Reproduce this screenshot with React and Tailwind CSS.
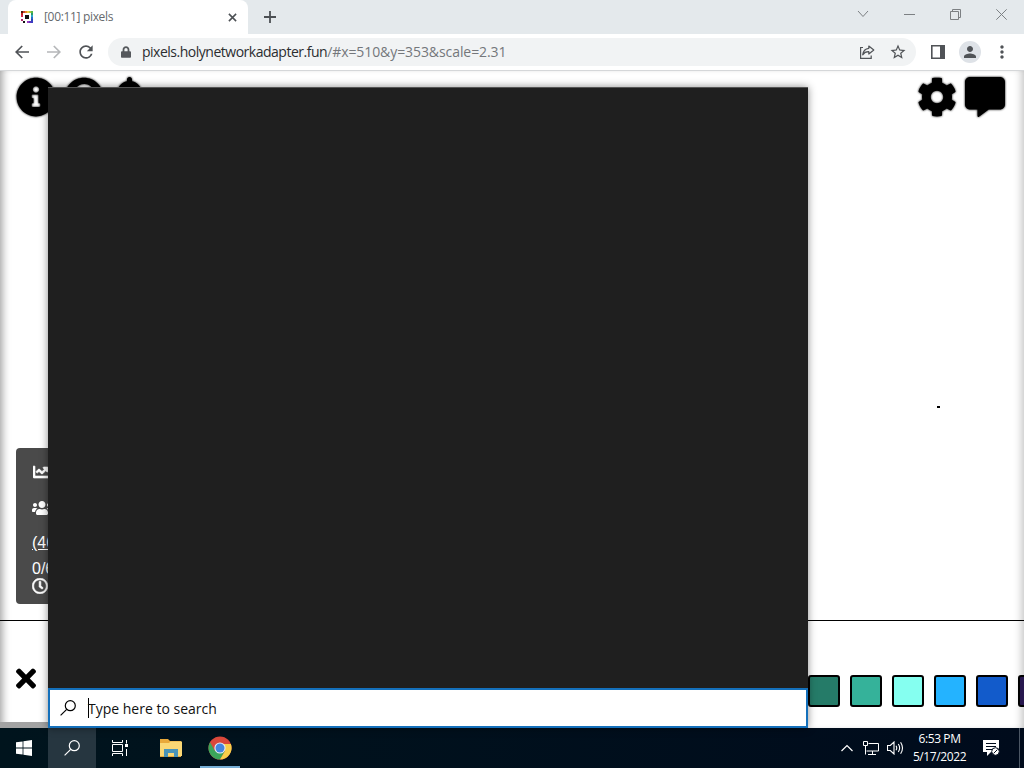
import React from 'react';
import {
  FaInfoCircle,
  FaQuestionCircle,
  FaBell,
  FaCog,
  FaCommentAlt,
  FaChartLine,
  FaUsers,
  FaRegClock,
  FaTimes,
  FaLock
} from 'react-icons/fa';
import { MdPerson, MdMoreVert, MdStarBorder, MdRefresh } from 'react-icons/md';

const palette = [
  'bg-[#257b68]',
  'bg-[#35b29a]',
  'bg-[#85fff0]',
  'bg-[#24b3ff]',
  'bg-[#125bcb]',
  'bg-[#27174e]'
];

const favicon = [
  '#4b1a10', '#c8402a', '#e88a2c', '#f0c843', '#a8c947', '#58b947',
  '#c0261c', '#ffffff', '#ffffff', '#ffffff', '#ffffff', '#2a9a6a',
  '#d0264c', '#ffffff', '#111111', '#111111', '#ffffff', '#28a8c8',
  '#ffffff', '#ffffff', '#111111', '#111111', '#ffffff', '#2868c8',
  '#b32a70', '#ffffff', '#ffffff', '#ffffff', '#ffffff', '#2a46b8',
  '#ffffff', '#111111', '#ffffff', '#9a3fc0', '#5b35c0', '#3c3cc0'
];

const SearchIcon = ({ className }) => (
  <svg viewBox="0 0 16 16" className={className} fill="none" stroke="currentColor" strokeWidth="1.2">
    <circle cx="10.3" cy="5.7" r="5" />
    <path d="M6.7 9.3L0.6 15.4" />
  </svg>
);

const TabStrip = () => (
  <div className="flex h-[34px] items-stretch bg-[#e4e9ec]">
    <div className="ml-2 flex w-[240px] items-center rounded-t-lg bg-white pl-[13px] pr-[11px]">
      <svg viewBox="0 0 6 6" className="h-3 w-3" shapeRendering="crispEdges">
        {favicon.map((fill, i) => (
          <rect key={i} x={i % 6} y={Math.floor(i / 6)} width="1" height="1" fill={fill} />
        ))}
      </svg>
      <span className="ml-[11px] flex-1 text-[12px] tracking-[-0.33px] text-[#66696d]">[00:11] pixels</span>
      <svg viewBox="0 0 10 10" className="h-[9px] w-[9px]" stroke="#4c5054" strokeWidth="1.7">
        <path d="M1 1l8 8M9 1l-8 8" />
      </svg>
    </div>
    <svg viewBox="0 0 12 12" className="ml-4 h-3 w-3 self-center" stroke="#4c5054" strokeWidth="1.8">
      <path d="M6 0v12M0 6h12" />
    </svg>
    <div className="ml-auto flex items-center gap-[35px] pr-[17px] pb-[6px] text-[#7c8083]">
      <svg viewBox="0 0 12 12" className="h-3 w-3" fill="none" stroke="currentColor">
        <path d="M1 3l5 5.5L11 3" />
      </svg>
      <svg viewBox="0 0 11 11" className="h-[11px] w-[11px]" fill="none" stroke="currentColor">
        <path d="M0 5.5h11" />
      </svg>
      <svg viewBox="0 0 11 11" className="h-[11px] w-[11px]" fill="none" stroke="currentColor">
        <path d="M0.5 2.5h8v8h-8zM2.5 2.5v-2h8v8h-2" />
      </svg>
      <svg viewBox="0 0 11 11" className="h-[11px] w-[11px]" fill="none" stroke="currentColor">
        <path d="M0.3 0.3l10.4 10.4M10.7 0.3L0.3 10.7" />
      </svg>
    </div>
  </div>
);

const Toolbar = () => (
  <div className="flex h-[37px] items-center border-b border-[#d5d7d9] bg-white pl-[15px] pr-[12px] text-[#505357]">
    <svg viewBox="0 0 14 14" className="h-[14px] w-[14px]" fill="none" stroke="currentColor" strokeWidth="1.7">
      <path d="M14 7H1.2M7.2 1L1.2 7l6 6" />
    </svg>
    <svg viewBox="0 0 14 14" className="ml-[18px] h-[14px] w-[14px]" fill="none" stroke="#b5b7b9" strokeWidth="1.7">
      <path d="M0 7h12.8M6.8 1l6 6-6 6" />
    </svg>
    <MdRefresh className="ml-[15px] h-5 w-5" />
    <div className="ml-3 flex h-7 w-[808px] shrink-0 items-center rounded-full bg-[#f1f3f4] pl-[13px] pr-[9px]">
      <FaLock className="mb-px h-3 w-[10px] text-[#55585c]" />
      <span className="ml-[11px] whitespace-nowrap pb-px text-[14px] tracking-[-0.08px] text-[#74777b]">
        <span className="tracking-[-0.49px] text-[#2b2d30]">pixels.holynetworkadapter.fun</span>/#x=510&amp;y=353&amp;scale=2.31
      </span>
      <svg viewBox="0 0 16 14" className="ml-auto h-[14px] w-4" fill="none" stroke="currentColor" strokeWidth="1.2">
        <path d="M4 2.500H1.600v10.800h10.600V10.500" />
        <path d="M9.800 1l5 4-5 4V6.700C7 6.600 5.200 7.500 3.700 9.800 4.200 6 6.200 3.700 9.800 3.300z" strokeLinejoin="round" />
      </svg>
      <MdStarBorder className="ml-[14px] h-[18px] w-[18px]" />
    </div>
    <svg viewBox="0 0 14 14" className="ml-[15px] h-[14px] w-[14px] shrink-0">
      <path d="M0.800 0.800h12.400v12.400H0.800z" fill="none" stroke="currentColor" strokeWidth="1.6" />
      <path d="M9 0h5v14H9z" fill="currentColor" />
    </svg>
    <div className="ml-[14px] flex h-[22px] w-[22px] shrink-0 items-center justify-center rounded-full bg-[#dee2e7]">
      <MdPerson className="h-[18px] w-[18px]" />
    </div>
    <MdMoreVert className="ml-[11px] h-5 w-5 shrink-0" />
  </div>
);

const StatsPanel = () => (
  <div className="ml-4 h-[156px] w-[120px] rounded bg-[#4a4a4a] pl-4 pt-4 font-['Liberation_Sans',sans-serif] text-base leading-[18px] text-white">
    <FaChartLine className="ml-px h-4 w-4 stroke-white stroke-[20]" />
    <FaUsers className="mt-5 h-4 w-5" />
    <div className="mt-[18px] underline">(46)</div>
    <div className="mt-[8px]">0/6</div>
    <FaRegClock className="h-4 w-4 stroke-white stroke-[20]" />
  </div>
);

const Page = () => (
  <div className="relative flex flex-1 flex-col overflow-hidden bg-white text-black shadow-[inset_8px_0_8px_-6px_rgba(0,0,0,0.4),inset_-8px_0_8px_-6px_rgba(0,0,0,0.25)]">
    <div className="flex h-[46px] items-start gap-2 pl-4 pr-[19px] pt-[6px]">
      <FaInfoCircle className="h-10 w-10 drop-shadow-[0_0_1px_#000]" />
      <FaQuestionCircle className="h-10 w-10 drop-shadow-[0_0_1px_#000]" />
      <FaBell className="h-10 w-[35px] drop-shadow-[0_0_1px_#000]" />
      <FaCog className="ml-auto h-10 w-10 drop-shadow-[0_0_1px_#000]" />
      <FaCommentAlt className="h-10 w-10 drop-shadow-[0_0_1px_#000]" />
    </div>
    <div className="flex-1">
      <div className="ml-[937px] mt-[289px] h-[2px] w-[3px] bg-black" />
    </div>
    <StatsPanel />
    <div className="mt-4 flex h-[102px] items-center border-t border-black pt-[14px]">
      <FaTimes className="ml-4 h-[29px] w-5 shrink-0" />
      <div className="ml-[772px] flex gap-[10px] pt-[24px]">
        {palette.map((color) => (
          <div key={color} className={`h-8 w-8 shrink-0 rounded-[3px] border-2 border-black ${color}`} />
        ))}
      </div>
    </div>
    <div className="h-[6px] w-12 bg-[#a3a3a3]" />
  </div>
);

const SearchFlyout = () => (
  <div className="absolute left-12 top-[87px] flex h-[641px] w-[760px] flex-col border-t border-[#555] bg-[#1f1f1f] shadow-[0_0_8px_rgba(0,0,0,0.45)]">
    <div className="flex-1" />
    <div className="flex h-10 items-center border-2 border-[#1470bb] bg-white pl-[10px] text-black">
      <SearchIcon className="h-4 w-4" />
      <div className="ml-3 h-5 w-px bg-black" />
      <span className="-ml-px text-[14px] text-[#111]">Type here to search</span>
    </div>
  </div>
);

const Taskbar = () => (
  <div className="flex h-10 items-stretch bg-linear-to-r from-[#00141d] to-[#000b1c] text-white">
    <div className="flex w-12 items-center justify-center">
      <svg viewBox="0 0 16 16" className="h-4 w-4" fill="currentColor">
        <path d="M0 2.300L6.600 1.400v6.200H0zM7.400 1.300L16 0v7.600H7.400zM0 8.400h6.600v6.200L0 13.700zM7.400 8.400H16V16l-8.600-1.300z" />
      </svg>
    </div>
    <div className="flex w-12 items-center justify-center bg-[#263640]">
      <SearchIcon className="h-4 w-4" />
    </div>
    <div className="flex w-12 items-center justify-center">
      <svg viewBox="0 0 16 16" className="h-4 w-4" fill="none" stroke="currentColor">
        <path d="M0.500 0v2.500h10V0M0.500 16v-2.500h10V16M0.500 4.500h10v7H0.500zM14.500 0v3.500M14.500 9v7" />
        <path d="M13 4h3v3h-3z" fill="currentColor" stroke="none" />
      </svg>
    </div>
    <div className="ml-4 flex w-[22px] items-center">
      <svg viewBox="0 0 22 20" className="h-5 w-[22px]">
        <path d="M0 1h8l2 2h11v16H0z" fill="#e9a93a" />
        <path d="M0 5h9l1.500-1.500H22V18H0z" fill="#fbd875" />
        <path d="M4 19v-8h14v8h-4v-4H8v4z" fill="#4a94b8" />
      </svg>
    </div>
    <div className="ml-[18px] flex w-10 flex-col items-center border-b-2 border-[#76aed6] pt-2">
      <svg viewBox="0 0 24 24" className="h-6 w-6">
        <circle cx="12" cy="12" r="11.500" fill="#d9483b" />
        <path d="M2.040 6.250A11.500 11.500 0 0 0 12 23.500l5-8.500H7z" fill="#3ba55a" />
        <path d="M22.900 8A11.500 11.500 0 0 1 12 23.500l5-8.500-2-7z" fill="#f7cf4a" />
        <circle cx="12" cy="12" r="5.600" fill="#e8eef5" />
        <circle cx="12" cy="12" r="4.500" fill="#4386e0" />
      </svg>
    </div>
    <div className="ml-auto flex items-center">
      <svg viewBox="0 0 12 8" className="h-2 w-3" fill="none" stroke="currentColor" strokeWidth="1.200">
        <path d="M0.500 7L6 1.500 11.500 7" />
      </svg>
      <svg viewBox="0 0 16 14" className="ml-[10px] h-[14px] w-4" fill="none" stroke="currentColor">
        <path d="M5.500 2.500h10v7.500H3.500M0.500 0.500h4v4h-4zM2.500 4.500v9M9.500 10v3.500M5 13.500h8" />
      </svg>
      <svg viewBox="0 0 17 14" className="ml-2 h-[14px] w-[17px]" fill="none" stroke="currentColor" strokeWidth="1.100">
        <path d="M0.500 4.500h2.800L7 1v12L3.300 9.500H0.500zM9 4.800q1.500 2.200 0 4.400M11.300 3q2.700 4 0 8M13.600 1.200q3.800 5.800 0 11.600" />
      </svg>
      <div className="ml-[7px] w-[57px] whitespace-nowrap text-center text-[12px] leading-[18px] tracking-[-0.4px]">
        <div>6:53 PM</div>
        <div>5/17/2022</div>
      </div>
      <svg viewBox="0 0 17 16" className="ml-[15px] mr-[19px] h-4 w-[17px]">
        <path d="M0 0h16v12H8l-4 4v-4H0z" fill="#fff" />
        <path d="M3 3.500h10M3 6.500h10M3 9.500h6" stroke="#000b1c" />
        <circle cx="12.500" cy="11.500" r="3.800" fill="#fff" stroke="#000b1c" />
        <path d="M10.500 13.500l4-4" stroke="#000b1c" />
      </svg>
      <div className="h-10 w-px bg-[#4b5664]" />
      <div className="w-1" />
    </div>
  </div>
);

const App = () => {
  return (
    <div className="relative flex h-[768px] w-[1024px] flex-col overflow-hidden bg-white font-['Open_Sans','Noto_Sans',sans-serif]">
      <TabStrip />
      <Toolbar />
      <Page />
      <SearchFlyout />
      <Taskbar />
    </div>
  );
};

export default App;
